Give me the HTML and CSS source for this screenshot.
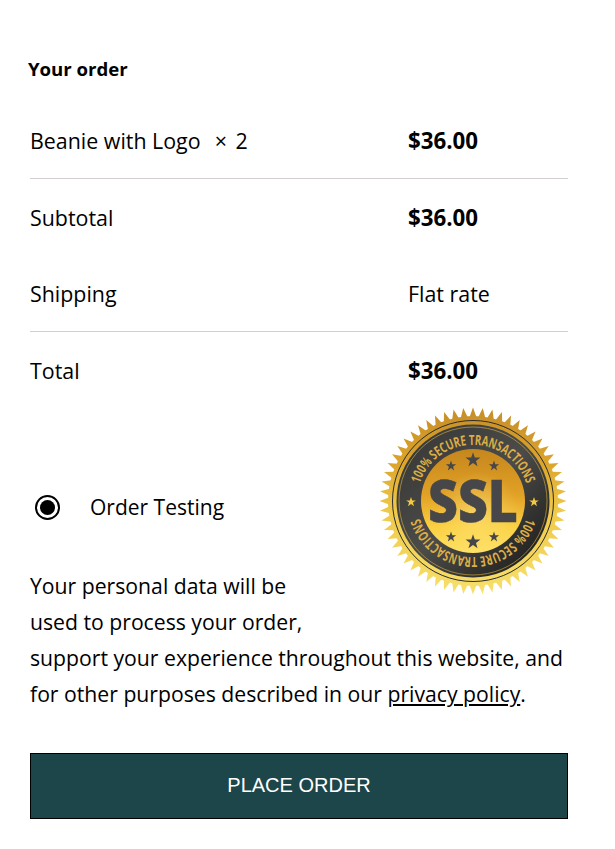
FILE: index.html
```html
<!DOCTYPE html>
<html lang="en">
<head>
<meta charset="utf-8">
<title>Your order</title>
<link rel="stylesheet" href="styles.css">
</head>
<body>
<main class="checkout">
  <h3 class="order-title">Your order</h3>
  <table class="order-table">
    <tr class="row-line"><td>Beanie with Logo&nbsp; <span class="qty">× 2</span></td><td class="amount"><b>$36.00</b></td></tr>
    <tr><td>Subtotal</td><td class="amount"><b>$36.00</b></td></tr>
    <tr class="row-line"><td>Shipping</td><td class="amount">Flat rate</td></tr>
    <tr><td>Total</td><td class="amount"><b>$36.00</b></td></tr>
  </table>
  <div class="payment">
    <svg class="seal" viewBox="-94 -94 188 188" width="188" height="188" role="img" aria-label="SSL 100% secure transactions">
      <defs>
        <polygon id="tooth" points="-3.4,-84 0,-93.5 3.4,-84"/>
        <g id="t5"><use href="#tooth"/><use href="#tooth" transform="rotate(6)"/><use href="#tooth" transform="rotate(12)"/><use href="#tooth" transform="rotate(18)"/><use href="#tooth" transform="rotate(24)"/></g>
        <g id="t20"><use href="#t5"/><use href="#t5" transform="rotate(30)"/><use href="#t5" transform="rotate(60)"/><use href="#t5" transform="rotate(90)"/></g>
        <mask id="teeth" maskUnits="userSpaceOnUse" x="-94" y="-94" width="188" height="188">
          <use href="#t20" fill="#fff"/><use href="#t20" fill="#fff" transform="rotate(120)"/><use href="#t20" fill="#fff" transform="rotate(240)"/>
          <circle r="85" fill="#fff"/>
        </mask>
        <linearGradient id="rim" x1="0" y1="0" x2="0" y2="1">
          <stop offset="0" stop-color="#c58d28"/><stop offset=".3" stop-color="#dca52c"/><stop offset=".55" stop-color="#efc94a"/><stop offset="1" stop-color="#f7e06c"/>
        </linearGradient>
        <linearGradient id="disc" x1="0" y1="0" x2="0" y2="1">
          <stop offset="0" stop-color="#c5861d"/><stop offset=".45" stop-color="#e2a226"/><stop offset=".75" stop-color="#fbd042"/><stop offset="1" stop-color="#fde167"/>
        </linearGradient>
        <radialGradient id="glow" cx=".55" cy=".62" r=".4">
          <stop offset="0" stop-color="#ffe98a" stop-opacity=".5"/><stop offset="1" stop-color="#ffe98a" stop-opacity="0"/>
        </radialGradient>
        <linearGradient id="band" x1="0" y1="0" x2="1" y2="1">
          <stop offset="0" stop-color="#353535"/><stop offset=".5" stop-color="#4b4b49"/><stop offset="1" stop-color="#161616"/>
        </linearGradient>
        <path id="arc-top" d="M-53.3,-17.3 A56,56 0 0 1 53.3,-17.3"/>
        <path id="arc-bottom" d="M53.3,17.3 A56,56 0 0 1 -53.3,17.3"/>
        <polygon id="star" points="0,-6 1.4,-1.9 5.7,-1.9 2.3,.7 3.5,4.9 0,2.3 -3.5,4.9 -2.3,.7 -5.7,-1.9 -1.4,-1.9"/>
      </defs>
      <rect x="-94" y="-94" width="188" height="188" fill="url(#rim)" mask="url(#teeth)"/>
      <circle r="80.5" fill="none" stroke="#2c2c2c" stroke-width="1"/>
      <circle r="76.5" fill="url(#band)"/>
      <circle r="74" fill="none" stroke="#e3b53c" stroke-width=".6"/>
      <circle r="52" fill="url(#disc)"/>
      <circle r="52" fill="url(#glow)"/>
      <text class="seal-ring"><textPath href="#arc-top" textLength="141" lengthAdjust="spacingAndGlyphs">100% SECURE TRANSACTIONS</textPath></text>
      <text class="seal-ring"><textPath href="#arc-bottom" textLength="141" lengthAdjust="spacingAndGlyphs">100% SECURE TRANSACTIONS</textPath></text>
      <text class="seal-mark" y="20.5" text-anchor="middle" textLength="90" lengthAdjust="spacingAndGlyphs">SSL</text>
      <g fill="#47474a">
        <use href="#star" transform="translate(0,-41) scale(1.3)"/><use href="#star" transform="translate(-22,-35) scale(.9)"/><use href="#star" transform="translate(21,-35) scale(.9)"/>
        <use href="#star" transform="translate(0,41) scale(1.3)"/><use href="#star" transform="translate(-22,36) scale(.9)"/><use href="#star" transform="translate(21,36) scale(.9)"/>
      </g>
      <g fill="#f3c93e">
        <use href="#star" transform="translate(-62,1) scale(.85)"/><use href="#star" transform="translate(61,1) scale(.85)"/>
      </g>
    </svg>
    <label class="method"><span class="radio"></span><span>Order Testing</span></label>
    <p class="privacy">Your personal data will be used to process your order, support your experience throughout this website, and for other purposes described in our <a href="#">privacy policy</a>.</p>
  </div>
  <button class="place-order" type="button">PLACE ORDER</button>
</main>
</body>
</html>
```

FILE: styles.css
```css
* { box-sizing: border-box; }
html, body { margin: 0; background: #fff; }
body { color: #000; font-family: "Open Sans", "Noto Sans", sans-serif; }
.checkout { padding: 57px 47px 0 30px; }
.order-title { margin: 0 0 0 -2px; font-size: 18.6px; line-height: 23px; font-weight: 700; }
.order-table { width: 100%; border-collapse: collapse; margin-top: 22px; font-size: 21.4px; }
.order-table td { padding: 0; height: 76.5px; vertical-align: middle; }
.order-table .amount { width: 160px; }
.order-table b { font-size: 22.3px; }
.qty { margin-left: 3px; word-spacing: 3px; }
.row-line td { border-bottom: 1px solid #d3ced2; }
.seal { float: right; display: block; margin: -1px 1px 20px 50px; }
.seal-ring { font: 700 14px "Open Sans", sans-serif; fill: #dcae45; }
.seal-mark { font: 800 58px "Open Sans", sans-serif; fill: #47474a; stroke: #47474a; stroke-width: .5px; }
.method { display: flex; align-items: center; gap: 30px; padding: 38px 0 0 5px; height: 160px; font-size: 21px; }
.radio { width: 25px; height: 25px; border: 2px solid #000; border-radius: 50%; display: flex; align-items: center; justify-content: center; }
.radio::before { content: ""; width: 15px; height: 15px; background: #000; border-radius: 50%; }
.privacy { margin: 0; font-size: 21.2px; line-height: 36px; }
.privacy a { color: #000; text-decoration: underline; }
.place-order { display: block; width: 100%; height: 66px; margin-top: 41px; padding: 0 0 2px; background: #1c464a; border: 1px solid #000; color: #fff; font: 400 20px "Liberation Sans", Arial, sans-serif; }
```
